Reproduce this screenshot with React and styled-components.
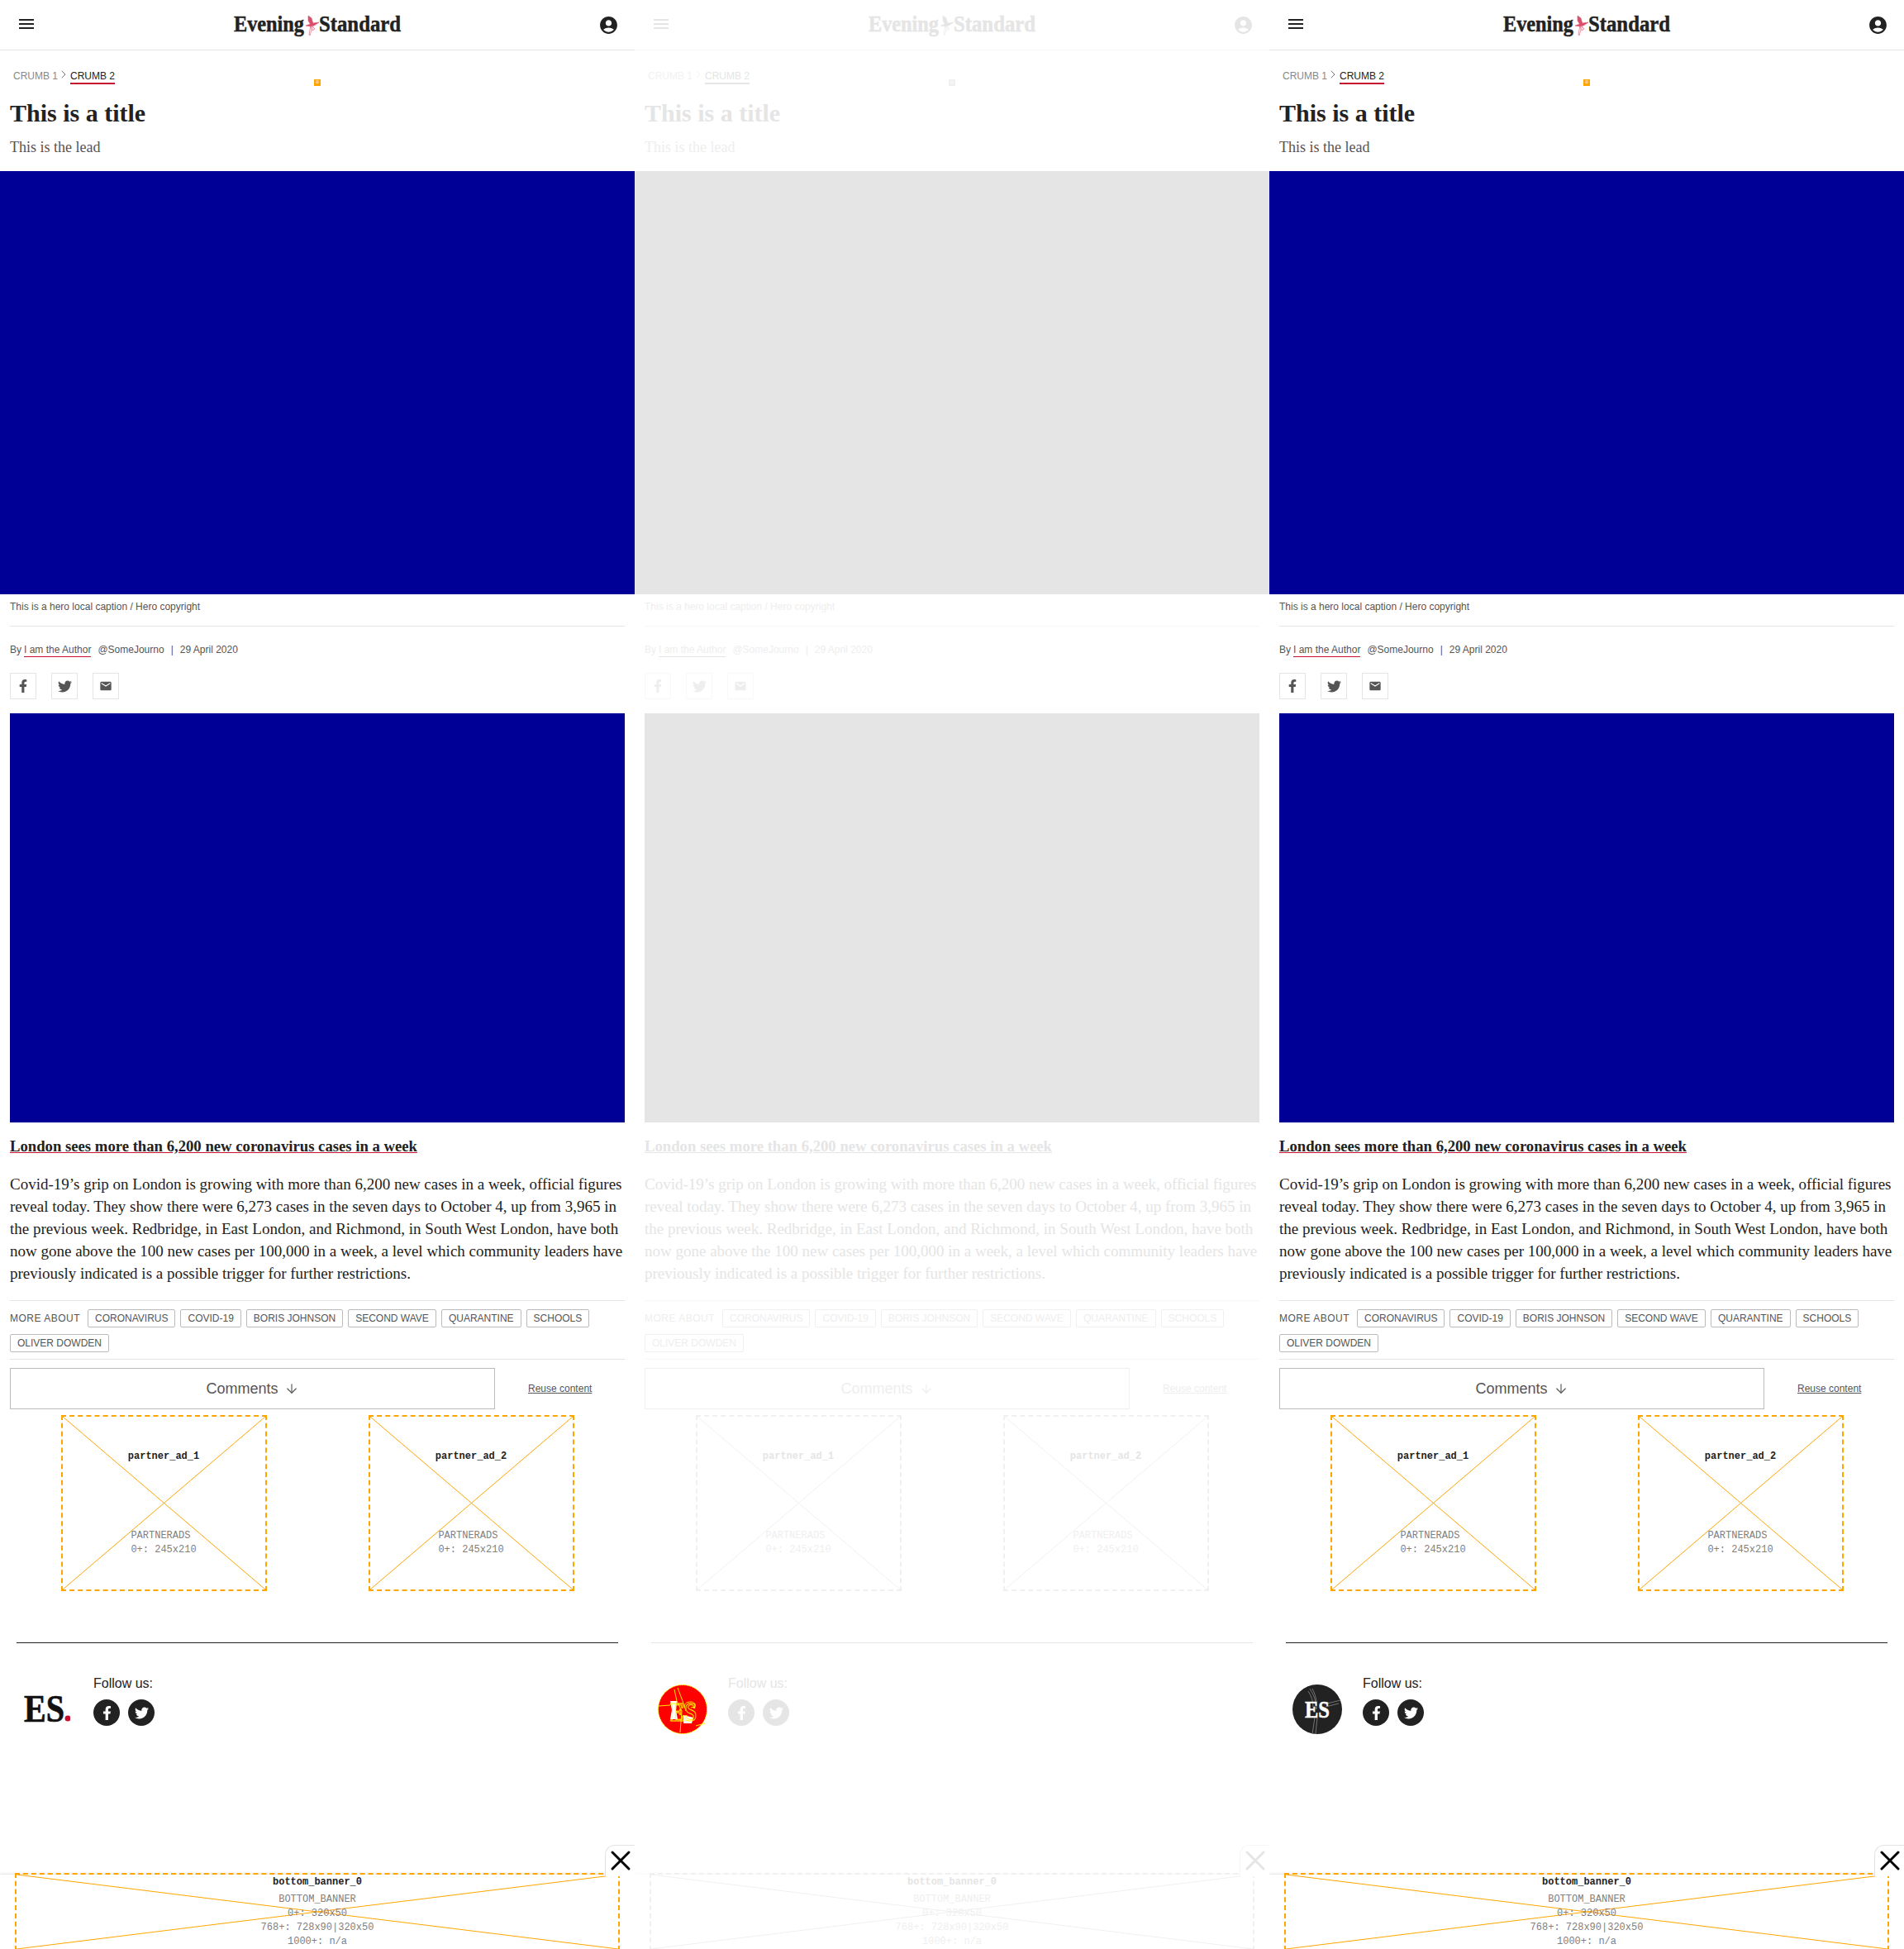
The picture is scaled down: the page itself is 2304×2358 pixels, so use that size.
import React from "react";
import styled, { createGlobalStyle } from "styled-components";
import { MdMenu, MdAccountCircle, MdEmail } from "react-icons/md";
import { FaFacebookF, FaTwitter } from "react-icons/fa";
import { ArrowDown, ChevronRight, X } from "lucide-react";

const GlobalStyle = createGlobalStyle`
  html, body {
    margin: 0;
    padding: 0;
    background: #fff;
    overflow: hidden;
  }
  * {
    box-sizing: border-box;
  }
`;

const Page = styled.div`
  display: grid;
  grid-template-columns: repeat(3, 768px);
  width: 2304px;
  height: 2358px;
`;

// every colour goes through a variable, the middle column is the same page in light grey
const Column = styled.div`
  --ink: ${(p) => (p.$ghost ? "#e5e5e5" : "#222222")};
  --soft: ${(p) => (p.$ghost ? "#eeeeee" : "#555555")};
  --faint: ${(p) => (p.$ghost ? "#f2f2f2" : "#888888")};
  --red: ${(p) => (p.$ghost ? "#e5e5e5" : "#c8102e")};
  --pink: ${(p) => (p.$ghost ? "#e5e5e5" : "#dc4f6a")};
  --blue: ${(p) => (p.$ghost ? "#e5e5e5" : "#000096")};
  --rule: ${(p) => (p.$ghost ? "#f8f8f8" : "#e5e5e5")};
  --edge: ${(p) => (p.$ghost ? "#f0f0f0" : "#bbbbbb")};
  --orange: ${(p) => (p.$ghost ? "#f0f0f0" : "#ffa500")};
  --mono: ${(p) => (p.$ghost ? "#efefef" : "#808080")};
  position: relative;
  height: 2358px;
  overflow: hidden;
  font-family: "Liberation Sans", Arial, sans-serif;
  color: var(--ink);
`;

const Header = styled.header`
  display: flex;
  align-items: center;
  justify-content: space-between;
  height: 61px;
  padding: 0 19px 2px 20px;
  border-bottom: 1px solid var(--rule);
  color: var(--ink);
`;

const HeaderIcon = styled.span`
  display: flex;
  font-size: ${(p) => p.$size}px;
  margin-top: ${(p) => p.$nudge || 0}px;
`;

const Breadcrumbs = styled.nav`
  display: flex;
  align-items: center;
  height: 19px;
  margin: 21px 0 0 16px;
  font-size: 12px;
`;

const CrumbLink = styled.span`
  color: ${(p) => (p.$active ? "var(--ink)" : "var(--faint)")};
  border-bottom: ${(p) => (p.$active ? "2px solid var(--red)" : "none")};
  padding-bottom: ${(p) => (p.$active ? "1px" : "0")};
  margin-top: ${(p) => (p.$active ? "3px" : "0")};
`;

const CrumbArrow = styled.span`
  display: flex;
  width: 16px;
  margin: -4px 0 0 -1px;
  color: var(--soft);
`;

const Marker = styled.div`
  position: absolute;
  left: 380px;
  top: 96px;
  width: 8px;
  height: 8px;
  background: var(--orange);
  color: #fff;
  font: 6px/8px "Liberation Mono", monospace;
  text-align: center;
`;

const Title = styled.h1`
  margin: 18px 0 0 12px;
  font-family: "Liberation Serif", "Times New Roman", serif;
  font-size: 30px;
  font-weight: 700;
  line-height: 36px;
`;

const Lead = styled.p`
  margin: 12px 0 18px 12px;
  font-family: "Liberation Serif", "Times New Roman", serif;
  font-size: 18px;
  line-height: 22px;
  color: var(--soft);
`;

const Hero = styled.div`
  height: 512px;
  background: var(--blue);
`;

const Caption = styled.div`
  margin: 0 12px;
  padding: 8px 0 15px;
  height: 39px;
  border-bottom: 1px solid var(--rule);
  font-size: 12px;
  line-height: 14px;
  color: var(--soft);
`;

const Byline = styled.div`
  display: flex;
  align-items: baseline;
  margin: 20px 12px 0;
  height: 16px;
  font-size: 12px;
  line-height: 16px;
  color: var(--soft);
`;

const AuthorLink = styled.span`
  margin: 0 8px 0 3px;
  border-bottom: 1px solid var(--red);
  height: 16px;
  line-height: 14px;
`;

const Divider = styled.span`
  margin: 0 8px;
`;

const ShareRow = styled.div`
  display: flex;
  gap: 18px;
  margin: 20px 12px 17px;
`;

const ShareButton = styled.div`
  display: flex;
  align-items: center;
  justify-content: center;
  width: 32px;
  height: 32px;
  border: 1px solid var(--rule);
  color: var(--soft);
  font-size: ${(p) => p.$size}px;
`;

const ArticleImage = styled.div`
  height: 495px;
  margin: 0 12px;
  background: var(--blue);
`;

const Headline = styled.a`
  display: block;
  margin: 19px 12px 0;
  font-family: "Liberation Serif", "Times New Roman", serif;
  font-size: 18.7px;
  font-weight: 700;
  line-height: 20px;
  color: var(--ink);
  text-decoration: underline;
  text-decoration-color: var(--red);
`;

const Body = styled.p`
  margin: 22px 12px 0;
  font-family: "Liberation Serif", "Times New Roman", serif;
  font-size: 19px;
  line-height: 27px;
  color: var(--ink);
`;

const TagSection = styled.div`
  display: flex;
  flex-wrap: wrap;
  align-items: center;
  gap: 8px 6px;
  margin: 19px 12px 0;
  padding: 10px 0 8px;
  border-top: 1px solid var(--rule);
  border-bottom: 1px solid var(--rule);
`;

const MoreAbout = styled.span`
  margin-right: 3px;
  font-size: 12px;
  line-height: 21px;
  letter-spacing: 0.5px;
  color: var(--soft);
`;

const Tag = styled.span`
  display: block;
  height: 22px;
  padding: 0 8px;
  border: 1px solid var(--edge);
  border-radius: 2px;
  font-size: 12px;
  line-height: 21px;
  color: var(--soft);
`;

const CommentsRow = styled.div`
  display: flex;
  align-items: center;
  margin: 10px 12px 0;
`;

const CommentsButton = styled.div`
  display: flex;
  align-items: center;
  justify-content: center;
  gap: 7px;
  width: 587px;
  height: 50px;
  border: 1px solid var(--edge);
  font-size: 18px;
  color: var(--soft);
`;

const ReuseLink = styled.a`
  margin-left: 40px;
  font-size: 12px;
  color: var(--soft);
  text-decoration: underline;
`;

const AdRow = styled.div`
  display: grid;
  grid-template-columns: 1fr 1fr;
  margin: 7px 12px 0;
`;

const AdSlot = styled.div`
  position: relative;
  width: ${(p) => p.$width}px;
  height: ${(p) => p.$height}px;
  border: 2px dashed var(--orange);
  justify-self: center;
  font-family: "Liberation Mono", "Courier New", monospace;
  font-size: 12px;
  line-height: 17px;
  color: var(--mono);
  text-align: center;
`;

const AdCross = styled.svg`
  position: absolute;
  inset: 0;
  width: 100%;
  height: 100%;
  stroke: var(--orange);
  stroke-width: 1;
`;

const AdContent = styled.div`
  position: relative;
  padding-top: ${(p) => p.$top}px;
`;

const AdName = styled.div`
  font-weight: 700;
  color: var(--ink);
  margin-bottom: ${(p) => p.$gap}px;
`;

const AdSizes = styled.div`
  display: inline-block;
  text-align: left;
`;

const Footer = styled.footer`
  margin: 62px 20px 0;
  border-top: 1px solid var(--ink);
  padding: 40px 8px 0;
  display: flex;
  gap: 28px;
`;

const LogoBox = styled.div`
  width: 57px;
  height: 60px;
  margin-top: 10px;
  flex: none;
`;

const FollowBlock = styled.div`
  display: flex;
  flex-direction: column;
  gap: 10px;
`;

const FollowLabel = styled.div`
  font-size: 16px;
  line-height: 18px;
  color: var(--ink);
`;

const FollowIcons = styled.div`
  display: flex;
  gap: 10px;
`;

const RoundIcon = styled.div`
  display: flex;
  align-items: center;
  justify-content: center;
  width: 32px;
  height: 32px;
  border-radius: 50%;
  background: var(--ink);
  color: #fff;
  font-size: 17px;
`;

const BottomBanner = styled.div`
  position: absolute;
  left: 0;
  right: 0;
  top: 2268px;
  height: 90px;
  background: #fff;
  box-shadow: 0 -1px 3px rgba(0, 0, 0, ${(p) => (p.$ghost ? 0.03 : 0.12)});
  display: flex;
  justify-content: center;
`;

const BannerAd = styled(AdSlot)`
  margin-top: -2px;
  flex: none;
`;

const CloseButton = styled.div`
  position: absolute;
  z-index: 1;
  right: 0;
  top: -36px;
  width: 36px;
  height: 38px;
  padding-bottom: 2px;
  display: flex;
  align-items: center;
  justify-content: center;
  background: #fff;
  border: 1px solid ${(p) => (p.$ghost ? "#f6f6f6" : "#e2e2e2")};
  border-width: 1px 0 0 1px;
  border-radius: 12px 0 0 0;
  color: ${(p) => (p.$ghost ? "#e5e5e5" : "#000")};
`;

const CloseIcon = styled(X)`
  flex: none;
`;

const Masthead = () => (
  <svg width="204" height="30" viewBox="0 0 204 30" fill="currentColor" stroke="currentColor" strokeWidth="0.5" style={{ overflow: "visible" }}>
    <text x="1" y="23.5" fontFamily="Liberation Serif" fontWeight="700" fontSize="27" textLength="85" lengthAdjust="spacingAndGlyphs">Evening</text>
    <text x="104" y="23.5" fontFamily="Liberation Serif" fontWeight="700" fontSize="27" textLength="99" lengthAdjust="spacingAndGlyphs">Standard</text>
    <g fill="var(--pink)" stroke="var(--pink)" strokeWidth="0.6">
      <path d="M91 5l4 3 2 7-3 1-3-5z" />
      <path d="M88 17l9-3 7-1-6 4-4 1z" />
      <path d="M94 17l1 5-2 7-1-1 1-6z" fill="none" />
      <path d="M96 18l3 3-3 2z" fill="none" />
    </g>
  </svg>
);

const EsLogo = () => (
  <svg width="57" height="60" viewBox="0 0 57 60" fill="#111" stroke="#111" strokeWidth="0.7" style={{ display: "block" }}>
    <text x="1" y="45" fontFamily="Liberation Serif" fontWeight="700" fontSize="47" textLength="49" lengthAdjust="spacingAndGlyphs">ES</text>
    <circle cx="54" cy="41" r="3.5" fill="#c8102e" stroke="none" />
  </svg>
);

const RedLogo = () => (
  <svg width="60" height="60" viewBox="0 0 60 60" style={{ display: "block" }}>
    <circle cx="30" cy="30" r="29.5" fill="#ff0000" stroke="#ffff00" strokeWidth="1" strokeDasharray="2 1" />
    <path d="M15 20h8l-1 11 2 11h-9l2-11z" fill="#fff" />
    <path d="M31 37l12 3-2 7h-10z" fill="#fff" />
    <text x="15" y="44" fill="none" stroke="#ffff00" strokeWidth="0.9" fontFamily="Liberation Serif" fontWeight="700" fontSize="32" textLength="32" lengthAdjust="spacingAndGlyphs">ES</text>
    <g fill="none" stroke="#ffff00" strokeWidth="0.9">
      <path d="M20 6l3 14 6 12-2 26" />
      <path d="M24 4l6 16 4 12" />
      <path d="M32 28c0-6 4-7 8-7s6 3 5 6l-5 1" />
      <path d="M1 26l14-1M46 50l11-3" />
    </g>
  </svg>
);

const DarkLogo = () => (
  <svg width="60" height="60" viewBox="0 0 60 60" style={{ display: "block" }}>
    <circle cx="30" cy="30" r="30" fill="#222" />
    <g fill="none" stroke="#888" strokeWidth="0.8">
      <path d="M21 5c5 8 8 15 7 25M24 5c4 8 6 15 5 25M19 8c4 6 6 12 6 20" />
      <path d="M27 40l-3 20M30 40l-2 20" />
      <path d="M38 24l20-5M40 27l16-4" />
    </g>
    <text x="15" y="40" fill="#fff" stroke="#fff" strokeWidth="0.5" fontFamily="Liberation Serif" fontWeight="700" fontSize="29" textLength="30" lengthAdjust="spacingAndGlyphs">ES</text>
  </svg>
);

const Cross = () => (
  <AdCross preserveAspectRatio="none" viewBox="0 0 100 100">
    <line x1="0" y1="0" x2="100" y2="100" vectorEffect="non-scaling-stroke" />
    <line x1="100" y1="0" x2="0" y2="100" vectorEffect="non-scaling-stroke" />
  </AdCross>
);

const TAGS = ["Coronavirus", "Covid-19", "Boris Johnson", "Second Wave", "Quarantine", "Schools", "Oliver Dowden"];

const PartnerAd = ({ name }) => (
  <AdSlot $width={249} $height={213}>
    <Cross />
    <AdContent $top={40}>
      <AdName $gap={79}>{name}</AdName>
      <AdSizes>
        PARTNERADS
        <br />
        0+: 245x210
      </AdSizes>
    </AdContent>
  </AdSlot>
);

const ArticlePage = ({ ghost, logo }) => (
  <Column $ghost={ghost}>
    <Header>
      <HeaderIcon $size={24}><MdMenu /></HeaderIcon>
      <Masthead />
      <HeaderIcon $size={25} $nudge={2}><MdAccountCircle /></HeaderIcon>
    </Header>
    <Breadcrumbs>
      <CrumbLink>CRUMB 1</CrumbLink>
      <CrumbArrow><ChevronRight size={16} strokeWidth={1.25} /></CrumbArrow>
      <CrumbLink $active>CRUMB 2</CrumbLink>
    </Breadcrumbs>
    <Marker>0</Marker>
    <Title>This is a title</Title>
    <Lead>This is the lead</Lead>
    <Hero />
    <Caption>This is a hero local caption / Hero copyright</Caption>
    <Byline>
      By <AuthorLink>I am the Author</AuthorLink> @SomeJourno <Divider>|</Divider> 29 April 2020
    </Byline>
    <ShareRow>
      <ShareButton $size={16}><FaFacebookF /></ShareButton>
      <ShareButton $size={17}><FaTwitter /></ShareButton>
      <ShareButton $size={16}><MdEmail /></ShareButton>
    </ShareRow>
    <ArticleImage />
    <Headline>London sees more than 6,200 new coronavirus cases in a week</Headline>
    <Body>
      Covid-19’s grip on London is growing with more than 6,200 new cases in a week, official figures reveal today. They show there were 6,273 cases in the seven days to October 4, up from 3,965 in the previous week. Redbridge, in East London, and Richmond, in South West London, have both now gone above the 100 new cases per 100,000 in a week, a level which community leaders have previously indicated is a possible trigger for further restrictions.
    </Body>
    <TagSection>
      <MoreAbout>MORE ABOUT</MoreAbout>
      {TAGS.map((tag) => (
        <Tag key={tag}>{tag.toUpperCase()}</Tag>
      ))}
    </TagSection>
    <CommentsRow>
      <CommentsButton>
        Comments <ArrowDown size={18} strokeWidth={1.5} />
      </CommentsButton>
      <ReuseLink>Reuse content</ReuseLink>
    </CommentsRow>
    <AdRow>
      <PartnerAd name="partner_ad_1" />
      <PartnerAd name="partner_ad_2" />
    </AdRow>
    <Footer>
      <LogoBox>{logo}</LogoBox>
      <FollowBlock>
        <FollowLabel>Follow us:</FollowLabel>
        <FollowIcons>
          <RoundIcon><FaFacebookF /></RoundIcon>
          <RoundIcon><FaTwitter /></RoundIcon>
        </FollowIcons>
      </FollowBlock>
    </Footer>
    <BottomBanner $ghost={ghost}>
      <CloseButton $ghost={ghost}><CloseIcon size={40} strokeWidth={1.8} /></CloseButton>
      <BannerAd $width={732} $height={94}>
        <Cross />
        <AdContent $top={1}>
          <AdName $gap={4}>bottom_banner_0</AdName>
          BOTTOM_BANNER
          <br />
          0+: 320x50
          <br />
          768+: 728x90|320x50
          <br />
          1000+: n/a
        </AdContent>
      </BannerAd>
    </BottomBanner>
  </Column>
);

export default function App() {
  return (
    <Page>
      <GlobalStyle />
      <ArticlePage logo={<EsLogo />} />
      <ArticlePage ghost logo={<RedLogo />} />
      <ArticlePage logo={<DarkLogo />} />
    </Page>
  );
}
